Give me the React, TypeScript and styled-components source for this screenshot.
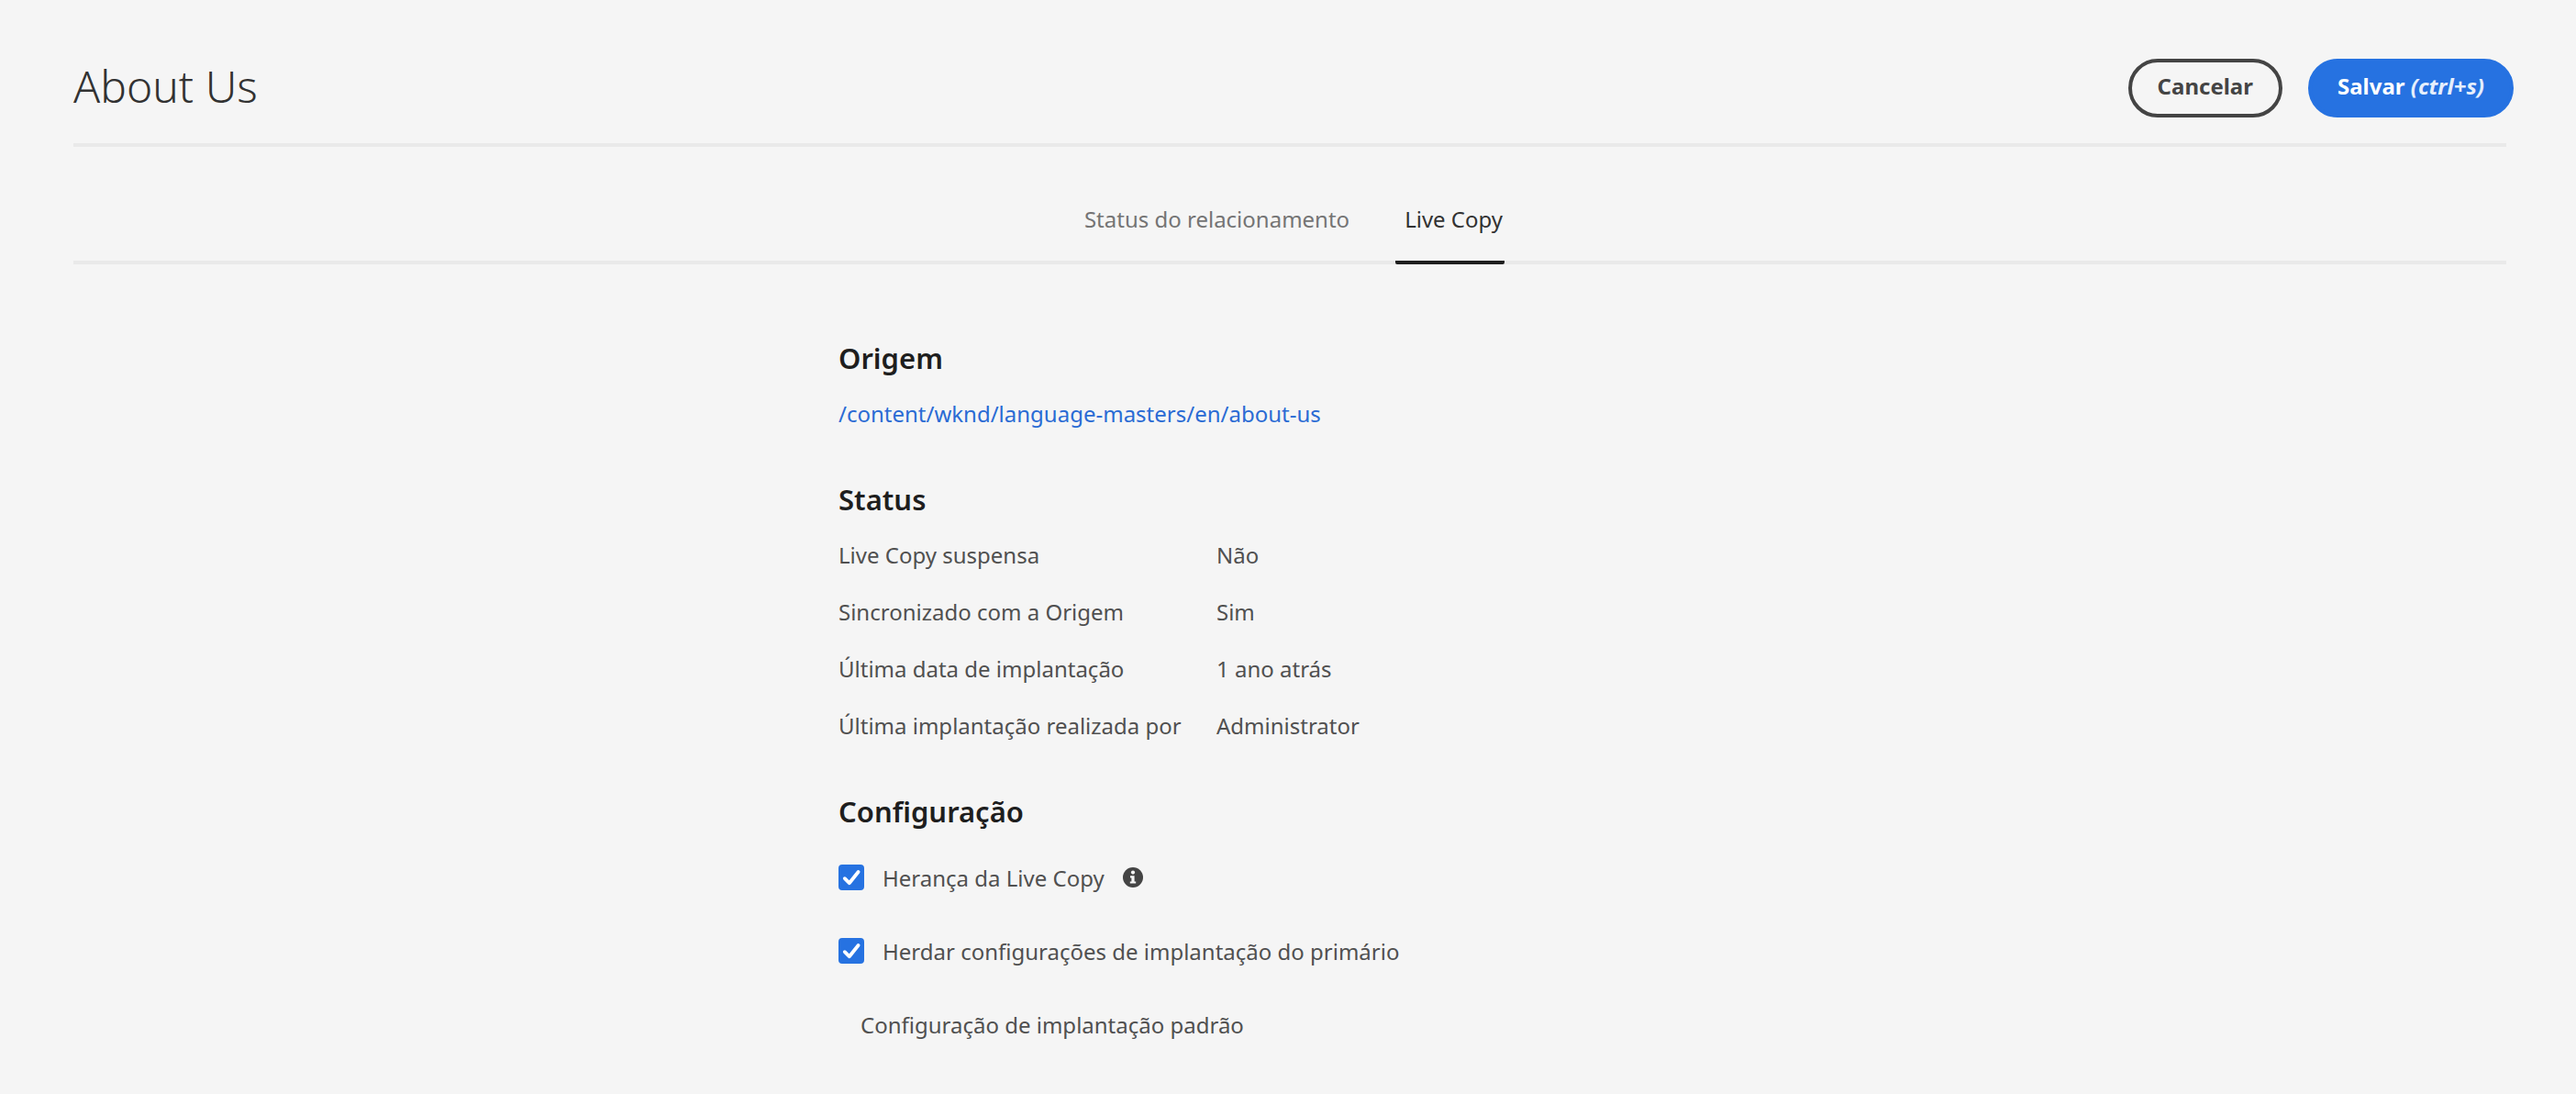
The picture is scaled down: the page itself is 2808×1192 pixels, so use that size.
import React, { useId, useState } from "react";
import styled, { createGlobalStyle } from "styled-components";

const color = {
  page: "#f5f5f5",
  line: "#e9e9e9",
  heading: "#1e1e1e",
  title: "#323232",
  text: "#505050",
  muted: "#747474",
  icon: "#444444",
  accent: "#2672e1",
  link: "#2a6bd4",
};

const GlobalStyle = createGlobalStyle`
  *, *::before, *::after { box-sizing: border-box; }
  body {
    margin: 0;
    background: ${color.page};
    color: ${color.text};
    font-family: "Noto Sans", "Open Sans", sans-serif;
    font-size: 24px;
    line-height: 30px;
  }
`;

const Page = styled.div`
  padding: 64px 76px 32px 80px;
`;

const Header = styled.header`
  display: flex;
  align-items: flex-start;
  justify-content: space-between;
  padding-bottom: 28px;
  border-bottom: 4px solid ${color.line};
`;

const Title = styled.h1`
  margin: 0;
  color: ${color.title};
  font-size: 48px;
  font-weight: 300;
  line-height: 60px;
`;

const Actions = styled.div`
  display: flex;
  gap: 28px;
  margin-right: -8px;
`;

const Button = styled.button<{ $primary?: boolean }>`
  height: 64px;
  padding: 0 28px 4px;
  border: 4px solid ${(p) => (p.$primary ? color.accent : color.icon)};
  border-radius: 32px;
  background: ${(p) => (p.$primary ? color.accent : "transparent")};
  color: ${(p) => (p.$primary ? "#ffffff" : color.icon)};
  font: inherit;
  font-weight: 700;
  white-space: nowrap;
  cursor: pointer;
`;

const Shortcut = styled.em`
  color: #e6effc;
`;

const Tabs = styled.div`
  display: flex;
  justify-content: center;
  gap: 48px;
  padding-top: 64px;
  border-bottom: 4px solid ${color.line};
`;

const Tab = styled.button<{ $selected: boolean }>`
  margin: 0 0 -4px;
  padding: 0 2px 30px 10px;
  border: 0;
  border-bottom: 4px solid ${(p) => (p.$selected ? color.heading : "transparent")};
  border-radius: 2px;
  background: none;
  color: ${(p) => (p.$selected ? color.title : color.muted)};
  font: inherit;
  cursor: pointer;
`;

const Content = styled.main`
  display: flex;
  flex-direction: column;
  gap: 58px;
  max-width: 984px;
  margin: 0 auto;
  padding-top: 82px;
`;

const Section = styled.section<{ $gap: number }>`
  display: flex;
  flex-direction: column;
  align-items: flex-start;
  gap: ${(p) => p.$gap}px;
`;

const Heading = styled.h2`
  margin: 0;
  color: ${color.heading};
  font-size: 31px;
  font-weight: 600;
  line-height: 40px;
`;

const SourceLink = styled.a`
  color: ${color.link};
  text-decoration: none;
`;

const Properties = styled.dl`
  display: grid;
  grid-template-columns: 412px auto;
  row-gap: 32px;
  margin: 0;
`;

const Term = styled.dt``;

const Value = styled.dd`
  margin: 0;
`;

const Options = styled.div`
  display: flex;
  flex-direction: column;
  gap: 50px;
`;

const Option = styled.div`
  display: flex;
  align-items: flex-start;
  gap: 20px;
`;

const CheckWrap = styled.span`
  display: grid;
  width: 28px;
  height: 28px;

  > * {
    grid-area: 1 / 1;
  }

  > svg {
    pointer-events: none;
    visibility: hidden;
  }

  > input:checked + svg {
    visibility: visible;
  }
`;

const CheckInput = styled.input`
  appearance: none;
  width: 28px;
  height: 28px;
  margin: 0;
  border: 4px solid ${color.muted};
  border-radius: 4px;
  cursor: pointer;

  &:checked {
    border-color: ${color.accent};
    background: ${color.accent};
  }
`;

const InfoButton = styled.button`
  display: flex;
  padding: 3px 0 0;
  border: 0;
  background: none;
  color: ${color.icon};
  cursor: pointer;
`;

const Note = styled.p`
  margin: 0;
  padding-left: 24px;
`;

function CheckMark() {
  return (
    <svg width="28" height="28" viewBox="0 0 28 28" fill="none" aria-hidden="true">
      <path
        d="M6.8 15.2 L11.8 20.2 L21.6 8"
        stroke="#ffffff"
        strokeWidth="3.8"
        strokeLinecap="round"
        strokeLinejoin="round"
      />
    </svg>
  );
}

function InfoIcon() {
  return (
    <svg width="22" height="22" viewBox="0 0 22 22" aria-hidden="true">
      <circle cx="11" cy="11" r="11" fill="currentColor" />
      <circle cx="11" cy="5.6" r="2.1" fill={color.page} />
      <path d="M8 9.2h4.6v6.2h1.6v2.2H7.8v-2.2h1.6v-4H8z" fill={color.page} />
    </svg>
  );
}

function CheckOption({ label, info }: { label: string; info?: string }) {
  const id = useId();
  const [checked, setChecked] = useState(true);
  return (
    <Option>
      <CheckWrap>
        <CheckInput
          id={id}
          type="checkbox"
          checked={checked}
          onChange={(e) => setChecked(e.target.checked)}
        />
        <CheckMark />
      </CheckWrap>
      <label htmlFor={id}>{label}</label>
      {info && (
        <InfoButton type="button" aria-label={info}>
          <InfoIcon />
        </InfoButton>
      )}
    </Option>
  );
}

const tabs = ["Status do relacionamento", "Live Copy"];

const properties = [
  ["Live Copy suspensa", "Não"],
  ["Sincronizado com a Origem", "Sim"],
  ["Última data de implantação", "1 ano atrás"],
  ["Última implantação realizada por", "Administrator"],
];

export default function App() {
  const [selected, setSelected] = useState("Live Copy");
  return (
    <>
      <GlobalStyle />
      <Page>
        <Header>
          <Title>About Us</Title>
          <Actions>
            <Button type="button">Cancelar</Button>
            <Button type="button" $primary>
              Salvar <Shortcut>(ctrl+s)</Shortcut>
            </Button>
          </Actions>
        </Header>
        <Tabs role="tablist">
          {tabs.map((name) => (
            <Tab
              key={name}
              type="button"
              role="tab"
              aria-selected={name === selected}
              $selected={name === selected}
              onClick={() => setSelected(name)}
            >
              {name}
            </Tab>
          ))}
        </Tabs>
        <Content>
          <Section $gap={26}>
            <Heading>Origem</Heading>
            <SourceLink href="#">/content/wknd/language-masters/en/about-us</SourceLink>
          </Section>
          <Section $gap={26}>
            <Heading>Status</Heading>
            <Properties>
              {properties.map(([term, value]) => (
                <React.Fragment key={term}>
                  <Term>{term}</Term>
                  <Value>{value}</Value>
                </React.Fragment>
              ))}
            </Properties>
          </Section>
          <Section $gap={38}>
            <Heading>Configuração</Heading>
            <Options>
              <CheckOption label="Herança da Live Copy" info="Info" />
              <CheckOption label="Herdar configurações de implantação do primário" />
              <Note>Configuração de implantação padrão</Note>
            </Options>
          </Section>
        </Content>
      </Page>
    </>
  );
}
